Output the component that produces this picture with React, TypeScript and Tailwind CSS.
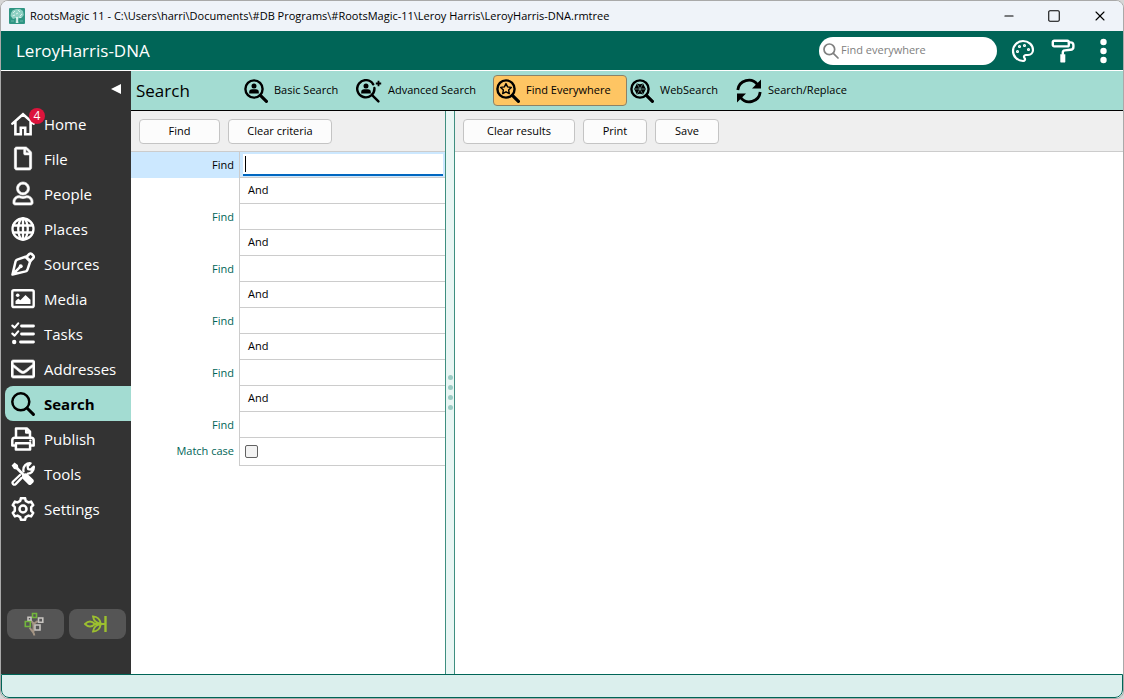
import React from "react";
import { FaRegEnvelope, FaRegFile, FaRegUser } from "react-icons/fa";
import { Minus, Palette, Square, X } from "lucide-react";

type IconProps = { children: React.ReactNode; className?: string; width?: number };

const Icon: React.FC<IconProps> = ({ children, className = "size-6", width = 2 }) => (
    <svg viewBox="0 0 24 24" fill="none" stroke="currentColor" strokeWidth={width} strokeLinecap="round" strokeLinejoin="round" className={className} aria-hidden="true">
        {children}
    </svg>
);

const HomeIcon = () => (
    <Icon width={2.6}>
        <path d="M1.4 11.6 12 2.2l10.6 9.4M4.4 9.5v12.7h5.4v-6.4h4.4v6.4h5.4V9.5" strokeLinejoin="miter" />
    </Icon>
);

const GlobeIcon = () => (
    <Icon width={2.3}>
        <circle cx="12" cy="12" r="10.5" />
        <ellipse cx="12" cy="12" rx="4.8" ry="10.5" />
        <path d="M2 8.5h20M2 15.5h20M12 1.5v21" />
    </Icon>
);

const PenIcon = () => (
    <Icon width={2.5}>
        <path d="m15.3 5 3-3q1.2-1 2.4 0l1.6 1.6q1 1.2 0 2.4l-3 3z" />
        <path d="M14.5 4.8 6.2 7.6Q5 8.1 4.6 9.3L1.5 22.5l13.2-3.1q1.2-.4 1.7-1.6l2.8-8.3zM2 22l6.2-6.2" />
        <circle cx="9.7" cy="14.3" r="2" fill="currentColor" stroke="none" />
    </Icon>
);

const ImageIcon = () => (
    <Icon width={2.4}>
        <rect x="1.3" y="3.2" width="21.4" height="16.8" rx="1.6" />
        <circle cx="6.7" cy="8.2" r="1.8" fill="currentColor" stroke="none" />
        <path d="M4.5 17v-3l2.8-2.4 2 1.6 5.2-5.2 5 4.8V17z" fill="currentColor" stroke="none" />
    </Icon>
);

const TasksIcon = () => (
    <Icon width={2.2}>
        <path d="m1.4 3.6 2.2 2L7.2 1.4M1.4 11.6l2.2 2 3.6-4.2" />
        <circle cx="3.2" cy="20" r="2.2" fill="currentColor" stroke="none" />
        <path d="M10.5 4h12M10.5 12h12M9.5 20h13" strokeWidth="2.8" />
    </Icon>
);

const SearchIcon = () => (
    <Icon width={2.5}>
        <circle cx="9.8" cy="9.8" r="8.5" />
        <path d="m16 16 6.4 6.4" strokeWidth="3" />
    </Icon>
);

const PrintIcon = () => (
    <Icon width={2.5}>
        <path d="M5 10.5V1.4h10.8L19 4.6v5.9M15.2 1.8v3.6H19" />
        <path d="M4.6 18.5H1.3v-5.2q0-2.6 2.6-2.6h16.2q2.6 0 2.6 2.6v5.2h-3.3" />
        <path d="M4.9 16.2h14.2v6.4H4.9z" />
        <circle cx="19.3" cy="13.6" r="1.2" fill="currentColor" stroke="none" />
    </Icon>
);

const ToolsIcon = () => (
    <Icon width={2.3}>
        <path d="M12.5 9.3q-.7-3.6 1.7-6.2 2.4-2.2 5.4-1.8l-3 3.2.5 2.6 2.6.5 3.1-3q.3 3.2-1.8 5.3-1.7 1.8-4.2 1.7M9 13l-6.9 6.5q-1.2 1.4 0 2.6 1.3 1.1 2.6 0l6-6.2" />
        <path d="M3.5.6.6 3.5 3 7l2.3.4 5.8 5.8q-.8 2.2.8 3.7l5.5 5.6q1.4 1.2 2.8 0l2.1-2.1q1.3-1.4 0-2.8l-5.5-5.4q-1.6-1.5-3.7-.8L7.3 5.6 6.9 3z" fill="currentColor" stroke="none" />
    </Icon>
);

const GearIcon = () => (
    <Icon width={2.5}>
        <path d="m9.3 3.8.6-2.6h4.2l.6 2.6 2.8 1.6 2.6-.8 2.1 3.6-2 1.9v3.8l2 1.9-2.1 3.6-2.6-.8-2.8 1.6-.6 2.6H9.9l-.6-2.6-2.8-1.6-2.6.8-2.1-3.6 2-1.9v-3.8l-2-1.9 2.1-3.6 2.6.8z" />
        <circle cx="12" cy="12" r="3.5" />
    </Icon>
);

const Lens: React.FC<{ children: React.ReactNode }> = ({ children }) => (
    <Icon width={2.4}>
        <circle cx="10" cy="10" r="8.6" />
        <path d="m16.4 16.4 6 6" strokeWidth="3.2" />
        {children}
    </Icon>
);

const Person = () => (
    <path d="M10 4.6a2.5 2.5 0 1 1 0 5 2.5 2.5 0 0 1 0-5zM5.2 14.4v-1.3q0-2.8 3-2.8h3.6q3 0 3 2.8v1.3z" fill="currentColor" stroke="none" />
);

const BasicIcon = () => (
    <Lens><Person /></Lens>
);

const AdvancedIcon = () => (
    <svg viewBox="0 0 26 24" fill="none" stroke="currentColor" strokeWidth="2.4" strokeLinecap="round" className="h-6 w-[26px]" aria-hidden="true">
        <path d="M17.2 5.3A8.6 8.6 0 1 0 18.4 9M16.4 16.4l6 6" />
        <path d="M22.5 1.8v5.4M19.8 4.5h5.4" strokeWidth="1.8" strokeLinecap="butt" />
        <Person />
    </svg>
);

const StarIcon = () => (
    <Lens>
        <path d="m10 4.6 1.6 3.3 3.7.5-2.7 2.5.7 3.7-3.3-1.8-3.3 1.8.7-3.7-2.7-2.5 3.7-.5z" strokeWidth="1.4" />
    </Lens>
);

const WebIcon = () => (
    <Lens>
        <path d="m6.9 4.6 3.1.6 3.1-.6L15.9 10l-2.8 5.4-3.1-.6-3.1.6L4.1 10z" fill="currentColor" stroke="none" />
        <path d="m7.6 5.6 4.8 8.8M12.4 5.6l-4.8 8.8M5.2 10h9.6" stroke="#a3dcd2" strokeWidth=".6" strokeDasharray="1.4 1" />
    </Lens>
);

const ReplaceIcon = () => (
    <svg viewBox="0 0 26 26" fill="none" stroke="currentColor" strokeWidth="2.8" className="size-[26px]" aria-hidden="true">
        <path d="M1.8 12A11 11 0 0 1 21.5 6.6M24.2 14A11 11 0 0 1 4.5 19.4" />
        <path d="M25 1.5v9h-9zM1 24.5v-9h9z" fill="currentColor" stroke="none" />
    </svg>
);

const RollerIcon = () => (
    <Icon width={2.4}>
        <rect x="1.8" y="1.8" width="16" height="5.6" rx="1.4" />
        <path d="M18 3.4h1.4q3 0 3 2.6v2q0 2.6-3 2.8l-5.6.6q-2 .3-2 2v1.6" />
        <path d="M9.3 15.2h5v7.2q0 1.2-1.2 1.2h-2.6q-1.2 0-1.2-1.2z" fill="currentColor" stroke="none" />
    </Icon>
);

const LogoIcon = () => (
    <svg viewBox="0 0 16 16" className="size-4" aria-hidden="true">
        <rect width="16" height="16" rx="1" fill="#2f9583" />
        <path d="M2 5 3.5 2.5 7 1h4l3 2 .8 4-2.3 3-3 .2L9 15H6.6L7 10l-3 1-2.4-3z" fill="#8fd0c3" />
        <path d="M7 15q.8-3.5-.2-6h2.3q-.8 3.4.4 6z" fill="#d9f1eb" />
        <path d="m4 5 2-2m3-1 2 2m-4 2 2-1m2 3 2-2M3.5 8 6 7m4 2 2 .5" stroke="#e3f5f1" strokeWidth=".9" />
        <path d="M2 13h3m6 0h3" stroke="#68b9aa" />
    </svg>
);

const TreeIcon = () => (
    <svg viewBox="0 0 20 24" fill="none" strokeWidth="1.6" className="h-6 w-5" aria-hidden="true">
        <path d="M10.3 23.5q-.2-2-1.3-3.4-2-2.4-3.4-4.6M9.4 20q.6-5.6-.4-9.5M9.6 12l4-3M9 11 7 8.6" stroke="#a39483" strokeWidth="2" />
        <path d="M8.5 1.5h4v4h-4z" stroke="#72b63c" />
        <path d="M4 5.3h3v3H4z" stroke="#c7c4c0" />
        <path d="M1.3 9.5h5v5h-5z" stroke="#72b63c" />
        <path d="M14.5 6h4.3v4.3h-4.3zM11 13h5v5h-5z" stroke="#c7c4c0" />
    </svg>
);

const LeafIcon = () => (
    <svg viewBox="0 0 24 18" fill="none" stroke="#9cbf2f" strokeWidth="1.9" className="h-[18px] w-6" aria-hidden="true">
        <path d="M1 9q5-5 10 0-5 5-10 0zM9 1.4q6.5.4 7.8 7.2Q10 8 9 1.4zM9 16.6q6.5-.4 7.8-7.2Q10 10 9 16.6zM10 9h11" />
        <path d="M21.5 1v16" strokeWidth="2.4" />
    </svg>
);

const navItems = [
    { label: "Home", icon: <HomeIcon />, badge: 4 },
    { label: "File", icon: <FaRegFile className="h-[23px] w-6 overflow-visible" strokeWidth={14} /> },
    { label: "People", icon: <FaRegUser className="h-[23px] w-6 overflow-visible" strokeWidth={14} /> },
    { label: "Places", icon: <GlobeIcon /> },
    { label: "Sources", icon: <PenIcon /> },
    { label: "Media", icon: <ImageIcon /> },
    { label: "Tasks", icon: <TasksIcon /> },
    { label: "Addresses", icon: <FaRegEnvelope className="size-6" strokeWidth={14} /> },
    { label: "Search", icon: <SearchIcon />, active: true },
    { label: "Publish", icon: <PrintIcon /> },
    { label: "Tools", icon: <ToolsIcon /> },
    { label: "Settings", icon: <GearIcon /> },
];

const TitleBar = () => (
    <div className="flex h-[30px] shrink-0 items-center justify-between bg-[#eff3f9] pr-[15px] pl-2">
        <div className="flex items-center gap-[5px]">
            <LogoIcon />
            <span className="text-[11px] whitespace-nowrap">RootsMagic 11 - C:\Users\harri\Documents\#DB Programs\#RootsMagic-11\Leroy Harris\LeroyHarris-DNA.rmtree</span>
        </div>
        <div className="flex items-center gap-[31px]">
            <button aria-label="Minimize"><Minus className="size-[14px]" strokeWidth={1.8} /></button>
            <button aria-label="Maximize"><Square className="size-[14px]" strokeWidth={1.8} /></button>
            <button aria-label="Close"><X className="size-4" strokeWidth={1.6} /></button>
        </div>
    </div>
);

const Header = () => (
    <header className="flex h-10 shrink-0 items-center justify-between border-b border-white bg-[#006557] pr-4 pl-[15px] text-white">
        <h1 className="text-[17px]">LeroyHarris-DNA</h1>
        <div className="flex items-center">
            <label className="flex h-7 w-[178px] items-center gap-[2px] rounded-full bg-white pl-1 text-[#808080]">
                <Icon className="size-4 shrink-0" width={2.6}>
                    <circle cx="9.5" cy="9.5" r="8" />
                    <path d="m15.5 15.5 7 7" />
                </Icon>
                <input type="search" aria-label="Find everywhere" placeholder="Find everywhere" className="w-full bg-transparent text-[11px] outline-none placeholder:text-[#808080]" />
            </label>
            <button aria-label="Theme" className="ml-[14px]"><Palette className="size-6" strokeWidth={2.2} /></button>
            <button aria-label="Format" className="ml-4"><RollerIcon /></button>
            <button aria-label="More" className="ml-[25px]">
                <svg viewBox="0 0 7 26" fill="currentColor" className="h-[26px] w-[7px]">
                    <circle cx="3.5" cy="4" r="3.2" />
                    <circle cx="3.5" cy="13" r="3.2" />
                    <circle cx="3.5" cy="22" r="3.2" />
                </svg>
            </button>
        </div>
    </header>
);

const hintClass = "flex h-[30px] flex-1 items-center justify-center rounded-lg bg-[#555555] pr-1";

const Sidebar = () => (
    <aside className="flex w-[130px] shrink-0 flex-col bg-[#333333] text-white">
        <div className="flex h-[35px] justify-end pr-[10px]">
            <button aria-label="Collapse menu">
                <svg viewBox="0 0 10 10" className="size-[10px]"><path d="M0 5 10 0v10z" fill="currentColor" /></svg>
            </button>
        </div>
        <nav className="pl-1">
            {navItems.map((item) => (
                <a
                    key={item.label}
                    href="#"
                    className={`relative flex h-[35px] items-center gap-[9px] rounded-l-lg pl-[6px] text-[15px] ${item.active ? "bg-[#a3dcd2] font-bold text-black" : ""}`}
                >
                    {item.icon}
                    {item.badge && (
                        <span className="absolute top-[2px] left-6 flex size-4 items-center justify-center rounded-full bg-[#dc143c] text-[12px]">{item.badge}</span>
                    )}
                    <span className="pt-[2px]">{item.label}</span>
                </a>
            ))}
        </nav>
        <div className="mt-auto mb-[35px] flex gap-[5px] pr-[5px] pl-[6px]">
            <button aria-label="Family tree" className={hintClass}><TreeIcon /></button>
            <button aria-label="Ancestry hints" className={hintClass}><LeafIcon /></button>
        </div>
    </aside>
);

const tabClass = "flex h-[31px] items-center gap-[6px] rounded border px-[2px]";

const SearchTabs = () => (
    <div className="flex h-10 shrink-0 items-center border-b border-black bg-[#a3dcd2] pl-[5px] text-[11px]">
        <h2 className="w-[105px] text-[17px]">Search</h2>
        <button className={`${tabClass} w-28 border-transparent`}><BasicIcon />Basic Search</button>
        <button className={`${tabClass} w-[140px] border-transparent`}><AdvancedIcon />Advanced Search</button>
        <button className={`${tabClass} w-[134px] border-[#8b8268] bg-[#fec563]`}><StarIcon />Find Everywhere</button>
        <button className={`${tabClass} w-[106px] border-transparent`}><WebIcon />WebSearch</button>
        <button className={`${tabClass} border-transparent`}><ReplaceIcon />Search/Replace</button>
    </div>
);

const PushButton: React.FC<{ children: string; className: string }> = ({ children, className }) => (
    <button className={`h-[25px] rounded border border-[#c4c4c4] bg-[#fcfcfc] text-[11px] ${className}`}>{children}</button>
);

const labelClass = "flex h-[26px] w-[108px] shrink-0 items-center justify-end pr-[5px]";
const cellClass = "flex flex-1 items-center border-b border-l border-[#cccccc]";

const Criteria = () => (
    <form className="text-[11px]">
        {[0, 1, 2, 3, 4, 5].map((i) => (
            <React.Fragment key={i}>
                {i > 0 && (
                    <div className="flex h-[26px]">
                        <span className={labelClass} />
                        <span className={`${cellClass} pl-2`}>And</span>
                    </div>
                )}
                <div className={`flex h-[26px] ${i === 0 ? "bg-[#cce8ff]" : ""}`}>
                    <label htmlFor={`find${i}`} className={`${labelClass} ${i === 0 ? "" : "text-[#006557]"}`}>Find</label>
                    {i === 0 ? (
                        <div className={`${cellClass} pr-[2px] pl-[3px]`}>
                            <div className="flex h-[22px] w-full items-center border-b-2 border-[#0067c0] bg-white pl-[2px]">
                                <span className="h-4 w-px bg-black" />
                                <input id="find0" type="text" className="w-full outline-none" />
                            </div>
                        </div>
                    ) : (
                        <div className={cellClass}>
                            <input id={`find${i}`} type="text" className="w-full px-2 outline-none" />
                        </div>
                    )}
                </div>
            </React.Fragment>
        ))}
        <div className="flex h-7">
            <label htmlFor="matchCase" className={`${labelClass} text-[#006557]`}>Match case</label>
            <div className={`${cellClass} pl-[5px]`}>
                <input id="matchCase" type="checkbox" className="size-[13px] appearance-none rounded-[2px] border border-[#626262] bg-[#f3f3f3]" />
            </div>
        </div>
    </form>
);

const panelBar = "flex h-[41px] shrink-0 items-center gap-2 border-b border-[#cccccc] bg-[#efefef] px-2";

export default function App() {
    return (
        <div className="h-screen bg-[#d6d6d6] font-['Open_Sans','Noto_Sans',sans-serif] text-black">
            <div className="flex h-full flex-col overflow-hidden rounded-lg border border-[#a9a9a9] bg-white">
                <TitleBar />
                <Header />
                <div className="flex min-h-0 flex-1">
                    <Sidebar />
                    <main className="flex min-w-0 flex-1 flex-col">
                        <SearchTabs />
                        <div className="flex min-h-0 flex-1">
                            <section className="w-[314px] shrink-0">
                                <div className={panelBar}>
                                    <PushButton className="w-[81px]">Find</PushButton>
                                    <PushButton className="w-[104px]">Clear criteria</PushButton>
                                </div>
                                <Criteria />
                            </section>
                            <div className="flex w-[10px] shrink-0 flex-col items-center justify-center gap-[5px] border-x border-[#3f8f80] bg-[#e9f6f4]">
                                <span className="size-[5px] rounded-full bg-[#9accc4]" />
                                <span className="size-[5px] rounded-full bg-[#9accc4]" />
                                <span className="size-[5px] rounded-full bg-[#9accc4]" />
                                <span className="size-[5px] rounded-full bg-[#9accc4]" />
                            </div>
                            <section className="flex-1">
                                <div className={panelBar}>
                                    <PushButton className="w-28">Clear results</PushButton>
                                    <PushButton className="w-16">Print</PushButton>
                                    <PushButton className="w-16">Save</PushButton>
                                </div>
                            </section>
                        </div>
                    </main>
                </div>
                <footer className="h-6 shrink-0 rounded-b-lg border border-[#006557] bg-[#dbefed]" />
            </div>
        </div>
    );
}
